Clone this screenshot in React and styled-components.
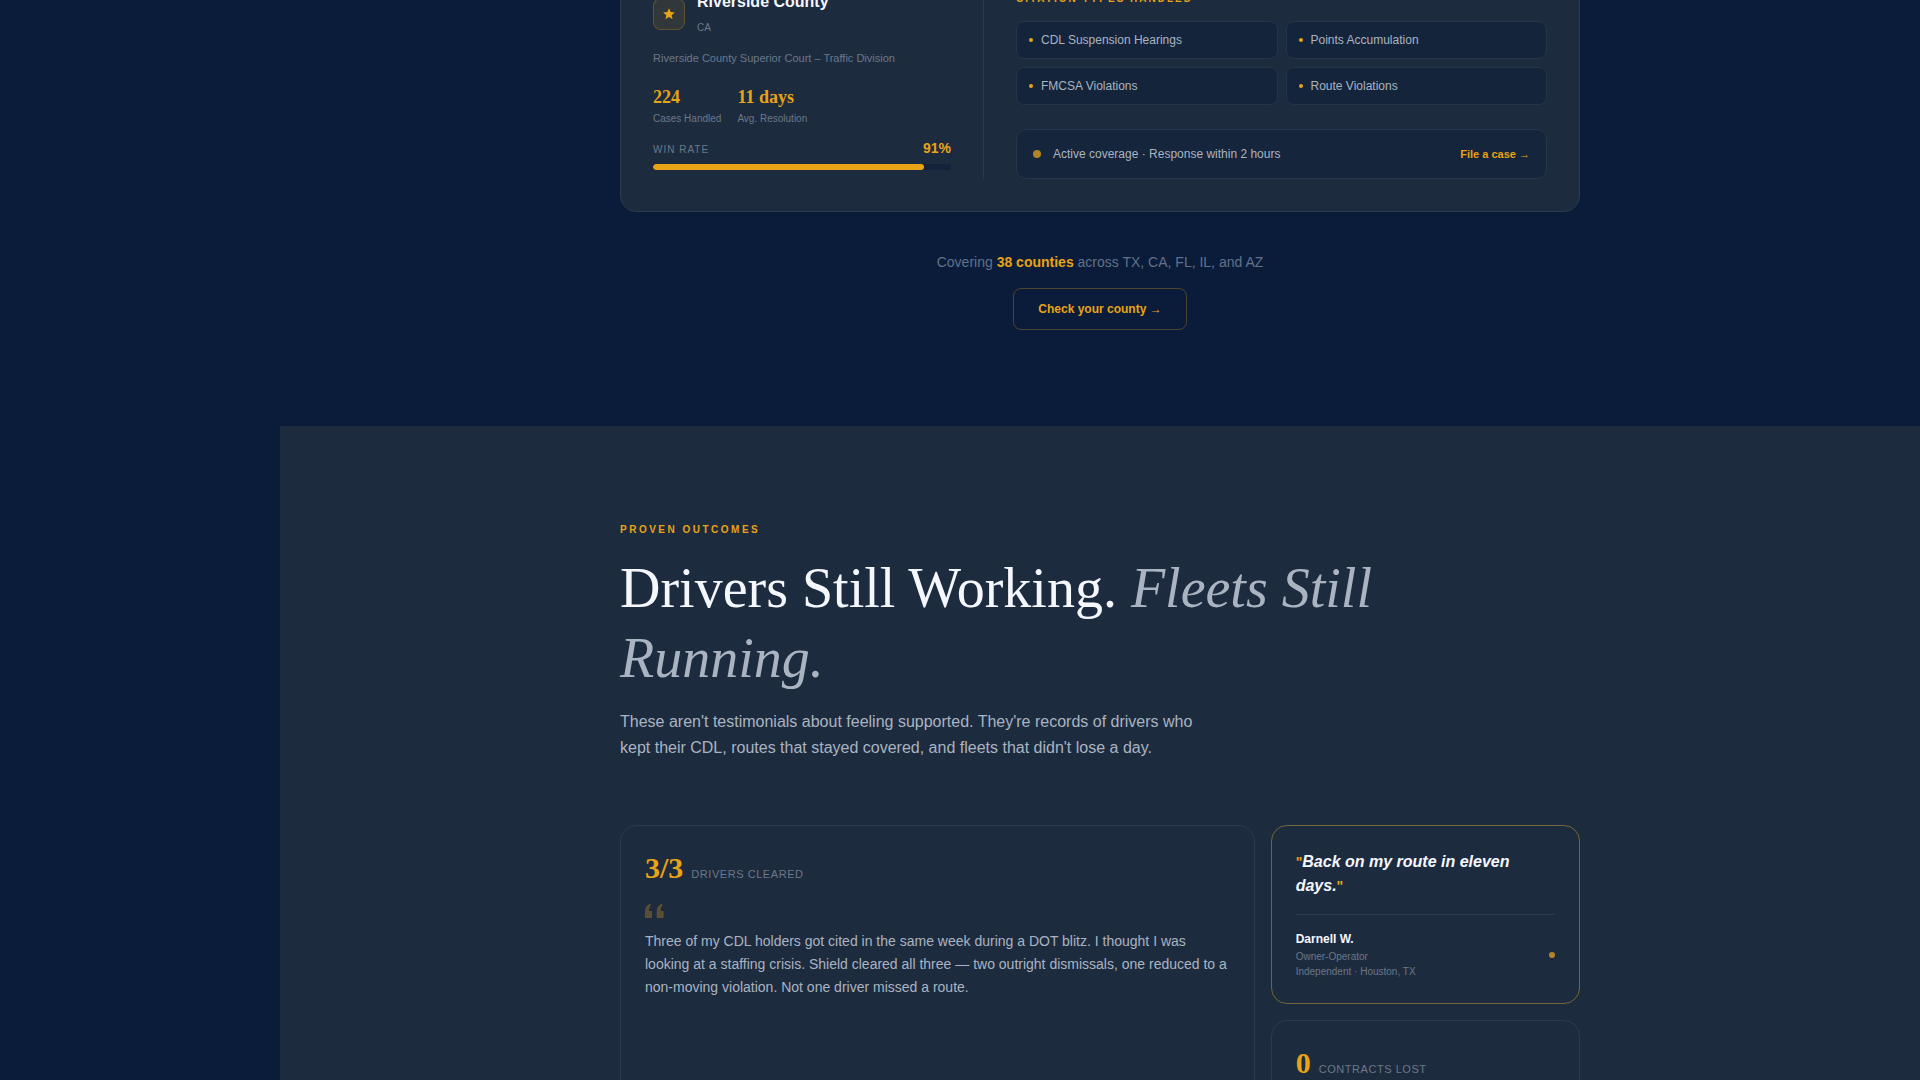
import React from "react";
import styled, { createGlobalStyle } from "styled-components";

const GlobalStyle = createGlobalStyle`
  * {
    box-sizing: border-box;
    margin: 0;
    padding: 0;
  }
  body {
    background: #0a1c39;
    font-family: "Liberation Sans", Arial, sans-serif;
    color: #f5f7ff;
  }
`;

const citations = [
  "CDL Suspension Hearings",
  "Points Accumulation",
  "FMCSA Violations",
  "Route Violations"
];

const stats = [
  { value: "224", label: "Cases Handled" },
  { value: "11 days", label: "Avg. Resolution" }
];

const winRate = 91;

function CountyCard() {
  return (
    <Card>
      <CountyInfo>
        <CountyHeader>
          <StarBox>
            <svg width="14" height="14" viewBox="0 0 24 24" fill="#e8a317">
              <path d="M12 17.27 18.18 21l-1.64-7.03L22 9.24l-7.19-.61L12 2 9.19 8.63 2 9.24l5.46 4.73L5.82 21z" />
            </svg>
          </StarBox>
          <div>
            <CountyName>Riverside County</CountyName>
            <CountyState>CA</CountyState>
          </div>
        </CountyHeader>
        <Court>Riverside County Superior Court – Traffic Division</Court>
        <StatRow>
          {stats.map(stat => (
            <div key={stat.label}>
              <StatValue>{stat.value}</StatValue>
              <StatLabel>{stat.label}</StatLabel>
            </div>
          ))}
        </StatRow>
        <WinHeader>
          <WinLabel>WIN RATE</WinLabel>
          <WinValue>{winRate}%</WinValue>
        </WinHeader>
        <Track>
          <Fill style={{ width: `${winRate}%` }} />
        </Track>
      </CountyInfo>
      <Coverage>
        <CoverageTitle>CITATION TYPES HANDLED</CoverageTitle>
        <PillGrid>
          {citations.map(name => (
            <Pill key={name}>
              <Dot $size={4} />
              {name}
            </Pill>
          ))}
        </PillGrid>
        <Status>
          <Dot $size={8} $dim />
          <StatusText>Active coverage · Response within 2 hours</StatusText>
          <CaseLink href="#file">File a case →</CaseLink>
        </Status>
      </Coverage>
    </Card>
  );
}

function Metric({ value, label }) {
  return (
    <MetricRow>
      <MetricValue>{value}</MetricValue>
      <MetricLabel>{label}</MetricLabel>
    </MetricRow>
  );
}

export default function App() {
  return (
    <Page>
      <GlobalStyle />
      <Main>
        <CountySection>
          <Container>
            <CountyCard />
            <Covering>
              Covering <strong>38 counties</strong> across TX, CA, FL, IL, and AZ
            </Covering>
            <CheckButton type="button">Check your county →</CheckButton>
          </Container>
        </CountySection>
        <OutcomeSection>
          <Container>
            <Eyebrow>PROVEN OUTCOMES</Eyebrow>
            <Title>
              Drivers Still Working. <em>Fleets Still Running.</em>
            </Title>
            <Lead>
              These aren't testimonials about feeling supported. They're records
              of drivers who kept their CDL, routes that stayed covered, and
              fleets that didn't lose a day.
            </Lead>
            <OutcomeGrid>
              <Outcome $wide>
                <Metric value="3/3" label="DRIVERS CLEARED" />
                <QuoteIcon width="20" height="14" viewBox="0 0 20 14">
                  <path d="M0 14V7.5Q0 2 4.4 0H6.2Q4 3 3.8 7H7V14ZM11.7 14V7.5Q11.7 2 16.1 0H17.9Q15.7 3 15.5 7H18.7V14Z" />
                </QuoteIcon>
                <Story>
                  Three of my CDL holders got cited in the same week during a
                  DOT blitz. I thought I was looking at a staffing crisis.
                  Shield cleared all three — two outright dismissals, one
                  reduced to a non-moving violation. Not one driver missed a
                  route.
                </Story>
              </Outcome>
              <Outcome $highlight>
                <Quote>
                  <Mark>"</Mark>Back on my route in eleven days.<Mark>"</Mark>
                </Quote>
                <Author>
                  <div>
                    <AuthorName>Darnell W.</AuthorName>
                    <AuthorInfo>Owner-Operator</AuthorInfo>
                    <AuthorInfo>Independent · Houston, TX</AuthorInfo>
                  </div>
                  <Dot $size={6} $dim />
                </Author>
              </Outcome>
              <Outcome>
                <Metric value="0" label="CONTRACTS LOST" />
              </Outcome>
            </OutcomeGrid>
          </Container>
        </OutcomeSection>
      </Main>
    </Page>
  );
}

const Page = styled.div`
  height: 100vh;
  overflow: hidden;
  padding-left: 280px;
`;

// starts part way down the county card
const Main = styled.main`
  margin-top: -44px;
`;

const CountySection = styled.section`
  padding-bottom: 96px;
  text-align: center;
`;

const OutcomeSection = styled.section`
  padding: 96px 0;
  background: #1d2b3f;
`;

const Container = styled.div`
  max-width: 960px;
  margin: 0 auto;
`;

const Card = styled.div`
  display: grid;
  grid-template-columns: 331px 1fr;
  gap: 32px;
  padding: 32px;
  text-align: left;
  background: #1d2b3f;
  border: 1px solid #2b3a4c;
  border-radius: 16px;
`;

const CountyInfo = styled.div`
  padding-right: 32px;
  border-right: 1px solid #2b3a4c;
`;

const CountyHeader = styled.div`
  display: flex;
  align-items: center;
  gap: 12px;
`;

const StarBox = styled.div`
  display: flex;
  align-items: center;
  justify-content: center;
  width: 32px;
  height: 32px;
  background: rgba(232, 163, 23, 0.1);
  border: 1px solid rgba(232, 163, 23, 0.25);
  border-radius: 8px;
`;

const CountyName = styled.h3`
  font-size: 16px;
  line-height: 26px;
`;

const CountyState = styled.p`
  margin-top: 2px;
  font-size: 10px;
  line-height: 22px;
  color: #6b7889;
`;

const Court = styled.p`
  margin-top: 10px;
  font-size: 11px;
  line-height: 18px;
  color: #6b7889;
`;

const StatRow = styled.div`
  display: flex;
  gap: 16px;
  margin-top: 16px;
`;

const StatValue = styled.p`
  font: bold 18px/28px "Liberation Serif", "Times New Roman", serif;
  color: #e8a317;
`;

const StatLabel = styled.p`
  font-size: 10px;
  line-height: 16px;
  color: #6b7889;
`;

const WinHeader = styled.div`
  display: flex;
  align-items: baseline;
  justify-content: space-between;
  margin-top: 12px;
  line-height: 18px;
`;

const WinLabel = styled.span`
  font-size: 10px;
  letter-spacing: 1px;
  color: #6b7889;
`;

const WinValue = styled.span`
  font-size: 14px;
  font-weight: bold;
  color: #e8a317;
`;

const Track = styled.div`
  height: 6px;
  margin-top: 5px;
  overflow: hidden;
  background: #14233b;
  border-radius: 3px;
`;

const Fill = styled.div`
  height: 100%;
  background: #e8a317;
  border-radius: 3px;
`;

const Coverage = styled.div`
  min-width: 0;
`;

const CoverageTitle = styled.h4`
  font-size: 10px;
  line-height: 20px;
  letter-spacing: 2px;
  color: #e8a317;
`;

const Eyebrow = styled.p`
  font-size: 10px;
  font-weight: bold;
  line-height: 16px;
  letter-spacing: 0.25em;
  color: #e8a317;
`;

const PillGrid = styled.ul`
  display: grid;
  grid-template-columns: 1fr 1fr;
  gap: 8px;
  margin: 12px 0 24px;
  list-style: none;
`;

const Pill = styled.li`
  display: flex;
  align-items: center;
  gap: 8px;
  padding: 10px 12px;
  font-size: 12px;
  line-height: 16px;
  color: #aab4c1;
  background: #14243b;
  border: 1px solid #24344a;
  border-radius: 8px;
`;

const Dot = styled.span`
  flex: none;
  width: ${props => props.$size}px;
  height: ${props => props.$size}px;
  border-radius: 50%;
  background: ${props => (props.$dim ? "#b08427" : "#e8a317")};
`;

const Status = styled.div`
  display: flex;
  align-items: center;
  gap: 12px;
  padding: 16px;
  line-height: 16px;
  background: #15253b;
  border: 1px solid #26364b;
  border-radius: 10px;
`;

const StatusText = styled.span`
  flex: 1;
  font-size: 12px;
  color: #aab4c1;
`;

const CaseLink = styled.a`
  font-size: 11px;
  font-weight: bold;
  color: #e8a317;
  text-decoration: none;
`;

const Covering = styled.p`
  margin: 40px 0 16px;
  font-size: 14px;
  line-height: 20px;
  color: #62718a;

  strong {
    color: #e8a317;
  }
`;

const CheckButton = styled.button`
  display: block;
  margin: 0 auto;
  padding: 12px 24px;
  font: bold 12px/16px "Liberation Sans", Arial, sans-serif;
  color: #e8a317;
  background: none;
  border: 1px solid rgba(232, 163, 23, 0.3);
  border-radius: 8px;
  cursor: pointer;
`;

const Title = styled.h2`
  margin: 15px 0 16px;
  font: normal 56px/70px "Liberation Serif", "Times New Roman", serif;

  em {
    color: #aab4c1;
  }
`;

const Lead = styled.p`
  max-width: 580px;
  margin-bottom: 64px;
  font-size: 16px;
  line-height: 26px;
  color: #aab4c1;
`;

const OutcomeGrid = styled.div`
  display: grid;
  grid-template-columns: repeat(3, 1fr);
  gap: 16px;
`;

const Outcome = styled.article`
  grid-column: ${props => (props.$wide ? "span 2" : "auto")};
  grid-row: ${props => (props.$wide ? "span 2" : "auto")};
  min-height: ${props => (props.$highlight ? "0" : "240px")};
  padding: 24px;
  border: 1px solid ${props => (props.$highlight ? "#74633b" : "#2b3a4f")};
  border-radius: 16px;
`;

const MetricRow = styled.div`
  display: flex;
  align-items: baseline;
  gap: 8px;
`;

const MetricValue = styled.span`
  font: bold 30px/36px "Liberation Serif", "Times New Roman", serif;
  color: #e8a317;
`;

const MetricLabel = styled.span`
  font-size: 11px;
  letter-spacing: 0.05em;
  color: #6b7889;
`;

const QuoteIcon = styled.svg`
  display: block;
  margin: 18px 0 12px;
  fill: #5b4e35;
`;

const Story = styled.p`
  font-size: 14px;
  line-height: 23px;
  color: #aab4c1;
`;

const Quote = styled.blockquote`
  padding-bottom: 16px;
  font-size: 16px;
  font-weight: bold;
  font-style: italic;
  line-height: 24px;
  border-bottom: 1px solid #2b3a4f;
`;

const Mark = styled.span`
  font-size: 14px;
  font-style: normal;
  line-height: 16px;
  color: #e8a317;
`;

const Author = styled.div`
  display: flex;
  align-items: center;
  justify-content: space-between;
  padding-top: 16px;
`;

const AuthorName = styled.p`
  margin-bottom: 2px;
  font-size: 12px;
  font-weight: bold;
  line-height: 16px;
`;

const AuthorInfo = styled.p`
  font-size: 10px;
  line-height: 15px;
  color: #6b7889;
`;
